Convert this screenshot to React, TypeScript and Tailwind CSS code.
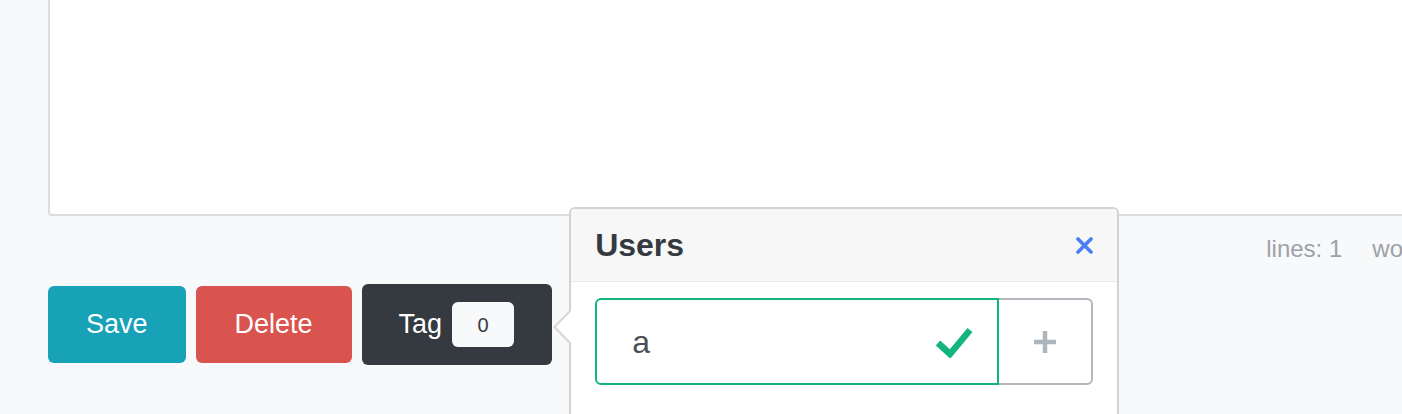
import React from 'react';

function CheckIcon() {
  return (
    <svg width="38" height="32" viewBox="0 0 38 32" fill="none">
      <path d="M3 17 L15 28 L35 4" stroke="#12b57c" strokeWidth="6.5" strokeLinejoin="miter" strokeLinecap="butt" />
    </svg>
  );
}

function PlusIcon() {
  return (
    <svg width="22" height="22" viewBox="0 0 22 22">
      <path d="M11 0 V22 M0 11 H22" stroke="#adb5bd" strokeWidth="4.5" />
    </svg>
  );
}

function CloseIcon() {
  return (
    <svg width="17" height="17" viewBox="0 0 17 17">
      <path d="M2 2 L15 15 M15 2 L2 15" stroke="#4a7ff5" strokeWidth="3.6" strokeLinecap="round" />
    </svg>
  );
}

function UsersPopover() {
  return (
    <div className="absolute left-[calc(100%+17px)] top-[-77px] w-[550px] h-[260px] bg-white border-2 border-[#d2d2d2] rounded-[6px]">
      <svg className="absolute left-[-18px] top-[100px]" width="18" height="36" viewBox="0 0 18 36">
        <path d="M18 1 L1.5 18 L18 35" fill="#ffffff" stroke="#d6d6d6" strokeWidth="2" />
      </svg>

      <div className="flex items-center justify-between h-[73px] px-6 bg-[#f7f7f7] border-b border-[#ebebeb] rounded-t-[6px]">
        <h3 className="text-[32px] font-bold leading-none text-[#343a40]">Users</h3>
        <CloseIcon />
      </div>

      <div className="px-6 pt-4">
        <div className="flex h-[87px]">
          <div className="flex flex-1 items-center justify-between pl-[35px] pr-[24px] border-2 border-[#12b57c] rounded-l-[6px]">
            <span className="text-[32px] leading-none text-[#495057]">a</span>
            <CheckIcon />
          </div>
          <div className="flex items-center justify-center w-[94px] border-2 border-l-0 border-[#b1b7bd] rounded-r-[6px]">
            <PlusIcon />
          </div>
        </div>
      </div>
    </div>
  );
}

export default function App() {
  return (
    <div className="w-full h-[414px] overflow-hidden bg-[#f8f9fa] font-['Liberation_Sans',Arial,sans-serif]">
      <div className="ml-[48px] w-[1415px]">
        <div className="mt-[-20px] h-[236px] bg-white border-2 border-[#dddddd] rounded-[4px]"></div>

        <div className="flex justify-end pt-[19px] text-[24px] leading-[28px] text-[#9da1a6]">
          <span>lines: 1</span>
          <span className="ml-[30px]">words: 1</span>
        </div>

        <div className="flex items-center gap-[10px] mt-[21px] text-[27px] text-white">
          <button className="h-[77px] px-[38px] rounded-[6px] bg-[#17a2b8]">Save</button>
          <button className="h-[77px] px-[39px] rounded-[6px] bg-[#d9534f]">Delete</button>
          <div className="relative">
            <button className="flex items-center h-[81px] pl-[37px] pr-[38px] rounded-[6px] bg-[#343a40]">
              <span>Tag</span>
              <span className="flex items-center justify-center ml-[10px] w-[62px] h-[45px] rounded-[6px] bg-[#f8f9fa] text-[20px] text-[#343a40]">
                0
              </span>
            </button>
            <UsersPopover />
          </div>
        </div>
      </div>
    </div>
  );
}
